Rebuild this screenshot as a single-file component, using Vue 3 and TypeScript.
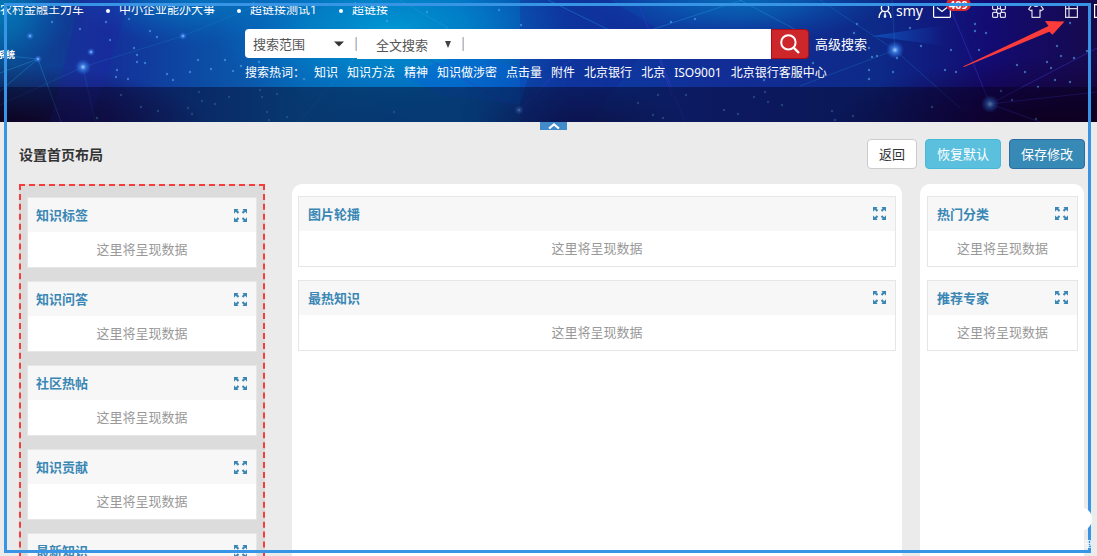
<script setup lang="ts">
import { ref } from 'vue'

const news = ['农村金融王力车', '中小企业能办大事', '超链接测试1', '超链接']
const hotWords = ['知识', '知识方法', '精神', '知识做涉密', '点击量', '附件', '北京银行', '北京', 'ISO9001', '北京银行客服中心']
const columns = [
  { kind: 'side', cards: ['知识标签', '知识问答', '社区热帖', '知识贡献', '最新知识'] },
  { kind: 'main', cards: ['图片轮播', '最热知识'] },
  { kind: 'extra', cards: ['热门分类', '推荐专家'] },
]
const placeholder = '这里将呈现数据'
const keyword = ref('')

const stars: number[][] = [
  [52, 22], [30, 36], [106, 22], [110, 40], [129, 19], [80, 29], [150, 31], [157, 37], [183, 36], [134, 48], [137, 55], [137, 62],
  [145, 63], [117, 70], [116, 77], [128, 79], [167, 74], [173, 80], [198, 60], [211, 69], [190, 72], [233, 71], [225, 60], [241, 66],
  [259, 62], [304, 79], [199, 92], [202, 101], [215, 104], [188, 108], [158, 111], [192, 114], [229, 97], [260, 90], [262, 97],
  [277, 94], [267, 112], [269, 120], [287, 117], [121, 95], [97, 118], [141, 107], [394, 112], [387, 21], [427, 12], [499, 10],
  [521, 25], [671, 22], [695, 19], [703, 68], [712, 69], [658, 95], [686, 95], [638, 103], [653, 115], [663, 118], [765, 92],
  [768, 102], [782, 105], [754, 97], [764, 80], [724, 110], [738, 114], [832, 111], [835, 120], [853, 116], [857, 24], [869, 48],
  [872, 57], [813, 63], [854, 33], [869, 70], [877, 56], [897, 58], [869, 79], [921, 46], [910, 28], [893, 72], [975, 24], [975, 31],
  [986, 33], [979, 50], [951, 50], [956, 72], [945, 70], [1017, 65], [1025, 72], [1057, 46], [1061, 56], [1047, 62], [1051, 68],
  [1055, 80], [1070, 82], [1038, 87], [1001, 91], [1012, 100], [1036, 119], [1074, 58], [1087, 51], [1070, 23], [932, 107],
]
const glows: number[][] = [[83, 67, 8], [895, 50, 9], [990, 104, 9], [38, 59, 4], [30, 36, 4], [91, 52, 4], [519, 110, 5], [183, 36, 4]]
</script>

<template>
  <div class="page">
    <header class="banner">
      <svg class="sky" viewBox="0 0 1097 122" preserveAspectRatio="none" aria-hidden="true">
        <defs>
          <linearGradient id="base" x1="0" y1="0" x2="1" y2="0">
            <stop offset="0" stop-color="#0a4c8c" />
            <stop offset=".1" stop-color="#14309a" />
            <stop offset=".18" stop-color="#0c4ba4" />
            <stop offset=".28" stop-color="#0866b4" />
            <stop offset=".42" stop-color="#0568bc" />
            <stop offset=".52" stop-color="#0b3da2" />
            <stop offset=".66" stop-color="#122d96" />
            <stop offset=".8" stop-color="#0d2a88" />
            <stop offset=".9" stop-color="#130b73" />
            <stop offset="1" stop-color="#160a4c" />
          </linearGradient>
          <radialGradient id="cyan">
            <stop offset="0" stop-color="#0098d4" />
            <stop offset=".45" stop-color="#0088cc" stop-opacity=".7" />
            <stop offset="1" stop-color="#0070c8" stop-opacity="0" />
          </radialGradient>
          <radialGradient id="night">
            <stop offset="0" stop-color="#150020" />
            <stop offset="1" stop-color="#150038" stop-opacity="0" />
          </radialGradient>
          <radialGradient id="glow">
            <stop offset="0" stop-color="#a6d4ff" />
            <stop offset=".35" stop-color="#3c82e6" stop-opacity=".8" />
            <stop offset="1" stop-color="#2864dc" stop-opacity="0" />
          </radialGradient>
          <linearGradient id="shard" x1="0" y1="0" x2="1" y2="0">
            <stop offset="0" stop-color="#1467dc" />
            <stop offset="1" stop-color="#1467dc" stop-opacity="0" />
          </linearGradient>
        </defs>
        <rect width="1097" height="122" fill="url(#base)" />
        <ellipse cx="390" cy="32" rx="175" ry="85" fill="url(#cyan)" />
        <ellipse cx="190" cy="-5" rx="120" ry="50" fill="url(#cyan)" opacity=".55" />
        <ellipse cx="740" cy="-5" rx="150" ry="48" fill="url(#cyan)" opacity=".6" />
        <ellipse cx="0" cy="10" rx="70" ry="60" fill="url(#cyan)" opacity=".6" />
        <ellipse cx="0" cy="126" rx="210" ry="62" fill="url(#night)" />
        <ellipse cx="1060" cy="126" rx="230" ry="70" fill="url(#night)" />
        <ellipse cx="580" cy="128" rx="110" ry="42" fill="url(#night)" opacity=".4" />
        <path d="M520 0 610 0 660 30 590 122 520 122Z" fill="#161a90" opacity=".25" />
        <path d="M872 36 945 25 945 46Z" fill="url(#shard)" opacity=".55" />
        <path d="M400 75 470 52 530 72 520 104 440 95Z" fill="#0761dc" opacity=".35" />
        <path d="M80 0 130 0 90 122 50 122Z" fill="#2422a4" opacity=".28" />
        <g fill="none" stroke="#27a2df" stroke-width="1" opacity=".35">
          <path d="M0 91 38 59 61 122M0 73 38 59 0 55M400 0 448 28 400 43M548 0 650 50M620 40 742 0M740 0 800 32" />
          <path d="M83 67 95 122M83 67 0 105M83 67 183 36 260 4M300 122 350 62 420 20M345 76 353 58" opacity=".5" />
          <path d="M895 50 800 86M895 50 960 108M892 0 895 50M820 0 895 50" opacity=".6" />
        </g>
        <g fill="none" stroke="#4138d3" stroke-width="1" opacity=".45">
          <path d="M947 0 990 104 1097 92M990 104 1040 122M990 104 1097 48M637 0 685 122M660 60 672 96M519 110 430 60M519 110 570 60" />
        </g>
        <circle v-for="(g, i) in glows" :key="'g' + i" :cx="g[0]" :cy="g[1]" :r="g[2]" fill="url(#glow)" />
        <circle v-for="(s, i) in stars" :key="'s' + i" :cx="s[0]" :cy="s[1]" r="1.2" fill="#55a9ea" opacity=".6" />
        <rect y="87" width="1097" height="35" fill="#060018" opacity=".44" />
      </svg>

      <div class="topbar">
        <ul class="news">
          <li v-for="item in news" :key="item"><a href="#">{{ item }}</a></li>
        </ul>
        <nav class="tools">
          <a href="#" class="user">
            <svg width="14" height="16" viewBox="0 0 14 16" fill="none" stroke="currentColor" stroke-width="1.4">
              <circle cx="7" cy="5" r="3.7" />
              <path d="M4.6 8.2Q1.2 10.2 1 15M9.4 8.2Q12.8 10.2 13 15" />
              <path d="M7 9.8 6 13.4 7 15 8 13.4Z" fill="currentColor" stroke-width=".6" />
            </svg>
            <span>smy</span>
          </a>
          <a href="#" class="mail" aria-label="消息">
            <svg width="18" height="14" viewBox="0 0 18 14" fill="none" stroke="currentColor" stroke-width="1.2">
              <rect x=".6" y=".6" width="16.8" height="12.8" rx="1" />
              <path d="M4 3.5 9 7.5 14 3.5" />
            </svg>
            <span class="badge">409</span>
          </a>
          <a href="#" class="apps" aria-label="应用">
            <svg width="14" height="14" viewBox="0 0 14 14" fill="none" stroke="currentColor" stroke-width="1.2" opacity=".85">
              <rect x=".6" y=".6" width="5" height="5" rx="1" />
              <rect x="8.4" y=".6" width="5" height="5" rx="1" />
              <rect x=".6" y="8.4" width="5" height="5" rx="1" />
              <rect x="8.4" y="8.4" width="5" height="5" rx="1" />
              <path d="M5.6 4.6h2.8M5.6 9.4h2.8M4.6 5.6v2.8M9.4 5.6v2.8" />
            </svg>
          </a>
          <a href="#" class="skin" aria-label="换肤">
            <svg width="16" height="14" viewBox="0 0 16 14" fill="none" stroke="currentColor" stroke-width="1.2" stroke-linejoin="round" opacity=".85">
              <path d="M5.2 1Q8 4 10.8 1L13 1.8 15.3 5.2 13 6.8 12 6V13.3H4V6L3 6.8 .7 5.2 3 1.8Z" />
            </svg>
          </a>
          <a href="#" aria-label="布局">
            <svg width="13" height="14" viewBox="0 0 13 14" fill="none" stroke="currentColor" stroke-width="1.2" opacity=".85">
              <path d="M.6 .6h11.8v12.8H.6ZM.6 4.6h11.8M4 .6v12.8" />
            </svg>
          </a>
          <a href="#" aria-label="更多" class="more">
            <svg width="13" height="14" viewBox="0 0 13 14" fill="none" stroke="currentColor" stroke-width="1.2">
              <path d="M.6 .6h11.8v12.8H.6Z" />
            </svg>
          </a>
        </nav>
      </div>

      <div class="search-area">
        <div class="brand">系统</div>
        <div class="finder">
          <form class="search" @submit.prevent>
            <label class="pick scope">
              <select aria-label="搜索范围"><option>搜索范围</option></select>
              <svg width="10" height="6" viewBox="0 0 10 6"><path d="M0 .5h10L5 5.5Z" fill="#333" /></svg>
            </label>
            <label class="pick mode">
              <select aria-label="搜索方式"><option>全文搜索</option></select>
              <svg width="6" height="7" viewBox="0 0 6 7"><path d="M0 0h6L3 7Z" fill="#444" /></svg>
            </label>
            <input v-model="keyword" type="text" aria-label="关键词" />
            <button type="submit" aria-label="搜索">
              <svg width="20" height="20" viewBox="0 0 20 20" fill="none" stroke="#fff" stroke-width="2">
                <circle cx="8.4" cy="8.4" r="7.2" />
                <path d="M13.6 13.6 19 19" stroke-width="2.4" />
              </svg>
            </button>
            <a href="#" class="advanced">高级搜索</a>
          </form>
          <div class="hot">
            <span>搜索热词：</span>
            <a v-for="word in hotWords" :key="word" href="#">{{ word }}</a>
          </div>
        </div>
      </div>
    </header>

    <main>
      <div class="fold">
        <button type="button" aria-label="收起">
          <svg width="12" height="6" viewBox="0 0 12 6" fill="none" stroke="#fff" stroke-width="2"><path d="M1 5.6 6 1.4 11 5.6" /></svg>
        </button>
      </div>
      <div class="heading">
        <h1>设置首页布局</h1>
        <div class="actions">
          <button type="button" class="btn">返回</button>
          <button type="button" class="btn reset">恢复默认</button>
          <button type="button" class="btn save">保存修改</button>
        </div>
      </div>
      <div class="layout">
        <section v-for="col in columns" :key="col.kind" class="column" :class="col.kind">
          <article v-for="card in col.cards" :key="card" class="card">
            <div class="card-head">
              <h2>{{ card }}</h2>
              <button type="button" :aria-label="'展开' + card">
                <svg width="13" height="13" viewBox="0 0 14 14" fill="currentColor">
                  <path d="M0 0H5L3.6 1.4 5.6 3.4 4 5 2 3 .4 4.6 0 5Z" />
                  <path d="M14 0H9L10.4 1.4 8.4 3.4 10 5 12 3 13.6 4.6 14 5Z" />
                  <path d="M0 14H5L3.6 12.6 5.6 10.6 4 9 2 11 .4 9.4 0 9Z" />
                  <path d="M14 14H9L10.4 12.6 8.4 10.6 10 9 12 11 13.6 9.4 14 9Z" />
                </svg>
              </button>
            </div>
            <p>{{ placeholder }}</p>
          </article>
        </section>
      </div>
    </main>

    <div class="frame"></div>
    <div class="handle"></div>
    <svg class="marks" width="130" height="12" viewBox="0 0 130 12" fill="none" stroke="#fff" aria-hidden="true">
      <path d="M1 9h3M7 9h4M18 9h4M26 9h23M56 9h3M63 9h8M78 9h4M85 9h6M98 9h2M107 9h12" opacity=".6" />
      <path d="M124.5 .5h5v5h-5ZM124 3.5h6M123 7.5h7M127.5 0v8" opacity=".7" />
    </svg>
    <svg class="arrow" width="102" height="47" viewBox="0 0 102 47" aria-hidden="true">
      <path d="M0 45.5 85.5 5 82 0 101.5 .4 89.5 13.7 86.3 10.7 1 46Z" fill="#fc3b3b" />
    </svg>
  </div>
</template>

<style>
body {
  margin: 0;
}
</style>

<style scoped>
.page {
  position: relative;
  display: flex;
  flex-direction: column;
  height: 100vh;
  overflow: hidden;
  background: #ebebeb;
  font-family: "Noto Sans", "Noto Sans CJK SC", sans-serif;
  font-size: 13px;
  color: #333;
}
a {
  color: inherit;
  text-decoration: none;
}
button,
select,
input {
  font: inherit;
  margin: 0;
  padding: 0;
  border: 0;
  background: none;
  color: inherit;
}
svg {
  display: block;
  flex: none;
}
.banner {
  position: relative;
  flex: none;
  height: 122px;
  color: #fff;
  overflow: hidden;
}
.sky {
  position: absolute;
  inset: 0;
  width: 100%;
  height: 100%;
}
.topbar {
  position: relative;
  display: flex;
  align-items: flex-start;
  justify-content: space-between;
  height: 29px;
}
.news {
  display: flex;
  margin: 0;
  padding: 0;
  list-style: none;
  font-size: 12px;
  line-height: 20px;
  white-space: nowrap;
}
.news li {
  display: flex;
  flex: none;
  align-items: center;
}
.news li + li::before {
  content: "";
  width: 4px;
  height: 4px;
  margin: 2px 9px 0 22px;
  border-radius: 50%;
  background: #fff;
}
.tools {
  display: flex;
  align-items: center;
  gap: 23px;
  height: 22px;
  margin-right: -10px;
}
.user {
  display: flex;
  align-items: center;
  gap: 4px;
  margin-right: -13px;
  font-size: 14px;
  line-height: 20px;
}
.mail {
  position: relative;
  margin-right: 18px;
}
.badge {
  position: absolute;
  left: 13px;
  bottom: 7px;
  padding: 0 3px;
  border-radius: 8px;
  background: #d22a2e;
  font-size: 11px;
  font-weight: bold;
  line-height: 13px;
}
.apps {
  margin-right: -1px;
}
.skin {
  margin-right: -2px;
}
.more {
  margin-left: -7px;
}
.search-area {
  position: relative;
  display: grid;
  grid-template-columns: 245px 1fr;
}
.brand {
  margin: 18px 0 0 -3px;
  font-size: 9px;
  font-weight: bold;
  line-height: 16px;
}
.search {
  display: flex;
  align-items: center;
  height: 30px;
}
.pick {
  display: flex;
  align-items: center;
  background: #fff;
  color: #555;
}
.pick::after {
  content: "";
  width: 1px;
  height: 14px;
  background: #a3bfe6;
  border-left: 1px solid #ecd0bd;
}
.pick select {
  appearance: none;
  outline: 0;
  height: 29px;
}
.scope {
  width: 112px;
  height: 29px;
  align-self: flex-start;
  border-radius: 4px 0 0 4px;
}
.scope select {
  width: 89px;
  padding-left: 8px;
}
.scope svg {
  margin-right: 11px;
}
.mode {
  width: 107px;
  height: 30px;
}
.mode select {
  width: 88px;
  padding: 2px 0 0 19px;
}
.mode svg {
  margin-right: 11px;
}
.search input {
  width: 307px;
  height: 30px;
  background: #fff;
  outline: 0;
  color: #555;
}
.search button {
  display: grid;
  place-items: center;
  box-sizing: border-box;
  width: 38px;
  height: 30px;
  border: 1px solid #ab0b12;
  border-radius: 0 4px 4px 0;
  background: #cd262b;
}
.advanced {
  margin-left: 6px;
  padding-bottom: 2px;
}
.hot {
  display: flex;
  gap: 9px;
  margin-top: 4px;
  font-size: 12px;
  line-height: 20px;
  white-space: nowrap;
}
main {
  flex: 1;
  display: flex;
  flex-direction: column;
  min-height: 0;
  padding: 0 12px 0 19px;
}
.fold {
  display: flex;
  justify-content: center;
  height: 8px;
  margin-right: 3px;
  margin-left: 6px;
}
.fold button {
  display: grid;
  place-items: center;
  width: 27px;
  height: 8px;
  background: #428bca;
}
.heading {
  display: flex;
  align-items: center;
  justify-content: space-between;
  padding: 9px 0 15px;
}
h1 {
  margin: 0;
  padding-top: 2px;
  font-size: 14px;
  line-height: 20px;
}
.actions {
  display: flex;
  gap: 8px;
}
.btn {
  height: 30px;
  padding: 0 11px 2px;
  border: 1px solid #ccc;
  border-radius: 4px;
  background: #fff;
}
.reset {
  border-color: #46b8da;
  background: #5bc0de;
  color: #fff;
}
.save {
  border-color: #2d6ca2;
  background: #3789b6;
  color: #fff;
}
.layout {
  flex: 1;
  display: grid;
  grid-template-columns: 246px 1fr 164px;
  column-gap: 18px;
  margin-right: 1px;
}
.column {
  display: flex;
  flex-direction: column;
  gap: 13px;
  padding: 12px 6px;
  border-radius: 10px 10px 0 0;
  background: #fff;
}
.side {
  padding: 11px 6px;
  border: 2px dashed #f73c3c;
  border-radius: 0;
  background: #dcdcdc;
}
.main {
  margin-left: 9px;
}
.extra {
  padding-left: 7px;
}
.card {
  border: 1px solid #e6e6e6;
}
.card-head {
  display: flex;
  align-items: center;
  justify-content: space-between;
  height: 34px;
  padding: 0 9px 0 8px;
  background: #f7f7f7;
  color: #3a87b5;
}
.main .card-head,
.extra .card-head {
  padding-left: 9px;
}
.main .card-head button,
.extra .card-head button {
  padding-bottom: 2px;
}
h2 {
  margin: 0;
  font-size: 13px;
  line-height: 20px;
}
.card p {
  margin: 0;
  background: #fff;
  color: #999;
  line-height: 35px;
  text-align: center;
}
.frame {
  position: absolute;
  inset: 3px 6px 3px 4px;
  border: 3px solid #3895e6;
  pointer-events: none;
}
.handle {
  position: absolute;
  right: 5px;
  bottom: 25px;
  width: 24px;
  height: 24px;
  border-radius: 50%;
  background: #fff;
}
.marks {
  position: absolute;
  right: 6px;
  bottom: 4px;
}
.arrow {
  position: absolute;
  top: 21px;
  right: 32px;
}
</style>
